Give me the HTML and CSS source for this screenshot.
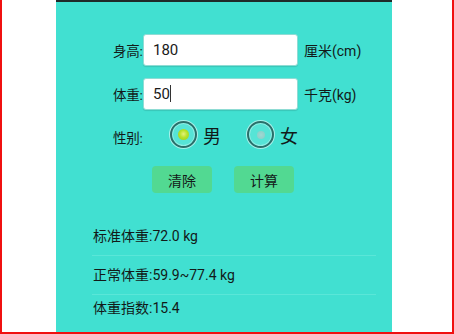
FILE: index.html
```html
<!DOCTYPE html>
<html lang="zh">

<head>
  <meta charset="UTF-8">
  <meta name="viewport" content="width=device-width, initial-scale=1.0">
  <title>BMI</title>
  <link rel="stylesheet" href="styles.css">
</head>

<body>
  <div class="frame">
    <div class="panel">
      <div class="form">
        <div class="row">
          <span class="label">身高:</span>
          <div class="field">180</div>
          <span class="unit">厘米(cm)</span>
        </div>
        <div class="row row2">
          <span class="label">体重:</span>
          <div class="field">50<span class="caret"></span></div>
          <span class="unit">千克(kg)</span>
        </div>
        <div class="row sex">
          <span class="label">性别:</span>
          <span class="radio on"></span>
          <span class="opt">男</span>
          <span class="radio off"></span>
          <span class="opt">女</span>
        </div>
        <div class="btns">
          <button type="button" class="btn">清除</button>
          <button type="button" class="btn">计算</button>
        </div>
      </div>
      <div class="result">
        <p class="line first">标准体重:72.0 kg</p>
        <p class="line">正常体重:59.9~77.4 kg</p>
        <p class="line last">体重指数:15.4</p>
      </div>
    </div>
  </div>
</body>

</html>
```

FILE: styles.css
```css
* {
  padding: 0;
  margin: 0;
  box-sizing: border-box;
}

body {
  font-family: Roboto, "Noto Sans CJK SC", sans-serif;
  color: #121a19;
  background: #fff;
}

.frame {
  width: 454px;
  height: 334px;
  border: 2px solid #f01010;
  border-top: 0;
  background: #fff;
  overflow: hidden;
}

.panel {
  margin-left: 54px;
  width: 336px;
  height: 332px;
  background-color: #41e0d1;
  border-top: 2px solid #1f2b2a;
}

.form {
  padding: 32px 0 0 57px;
}

.row {
  display: flex;
  align-items: center;
  height: 32px;
}

.row2 {
  margin-top: 12px;
}

.label {
  font-size: 13.5px;
  width: 30px;
  white-space: nowrap;
  letter-spacing: -0.2px;
}

.field {
  width: 155px;
  height: 32px;
  background: #fff;
  border: 1px solid #8fdcd4;
  border-radius: 3px;
  box-shadow: 0 1px 1px rgba(0, 0, 0, 0.12);
  font-size: 15px;
  line-height: 30px;
  padding-left: 9px;
  color: #1a1a1a;
}

.caret {
  display: inline-block;
  width: 1px;
  height: 17px;
  background: #333;
  vertical-align: -3px;
}

.unit {
  font-size: 14px;
  margin-left: 6px;
}

.sex {
  margin-top: 11px;
  height: 27px;
}

.sex .label {
  margin-top: 4px;
}

.radio {
  width: 27px;
  height: 27px;
  border-radius: 50%;
  border: 2px solid #2a6f6a;
  box-shadow: 0 0 0 1px rgba(255, 255, 255, 0.55), inset 0 0 0 1px rgba(255, 255, 255, 0.35);
  background: #56e4d6;
  display: flex;
  align-items: center;
  justify-content: center;
}

.radio::after {
  content: "";
  border-radius: 50%;
}

.radio.on {
  margin-left: 27px;
}

.radio.on::after {
  width: 11px;
  height: 11px;
  background: radial-gradient(circle at 50% 45%, #e4f27a 0, #b6e22a 45%, #93cf1e 100%);
}

.radio.off {
  margin-left: 26px;
}

.radio.off::after {
  width: 8px;
  height: 8px;
  background: radial-gradient(circle, #9fd8d2 0, #86cdc6 100%);
}

.opt {
  font-size: 18px;
  margin-left: 6px;
}

.btns {
  display: flex;
  gap: 22px;
  margin: 18px 0 0 39px;
}

.btn {
  width: 60px;
  height: 27px;
  border: 0;
  border-radius: 4px;
  background-color: #52d992;
  color: #121a19;
  font-family: inherit;
  font-size: 14px;
}

.result {
  margin: 24px 0 0 36px;
  width: 284px;
}

.line {
  font-size: 14px;
  height: 39px;
  line-height: 39px;
  padding-left: 1px;
  border-bottom: 1px solid #5ae6d8;
}

.line.last {
  border-bottom: 0;
  line-height: 26px;
}
```
